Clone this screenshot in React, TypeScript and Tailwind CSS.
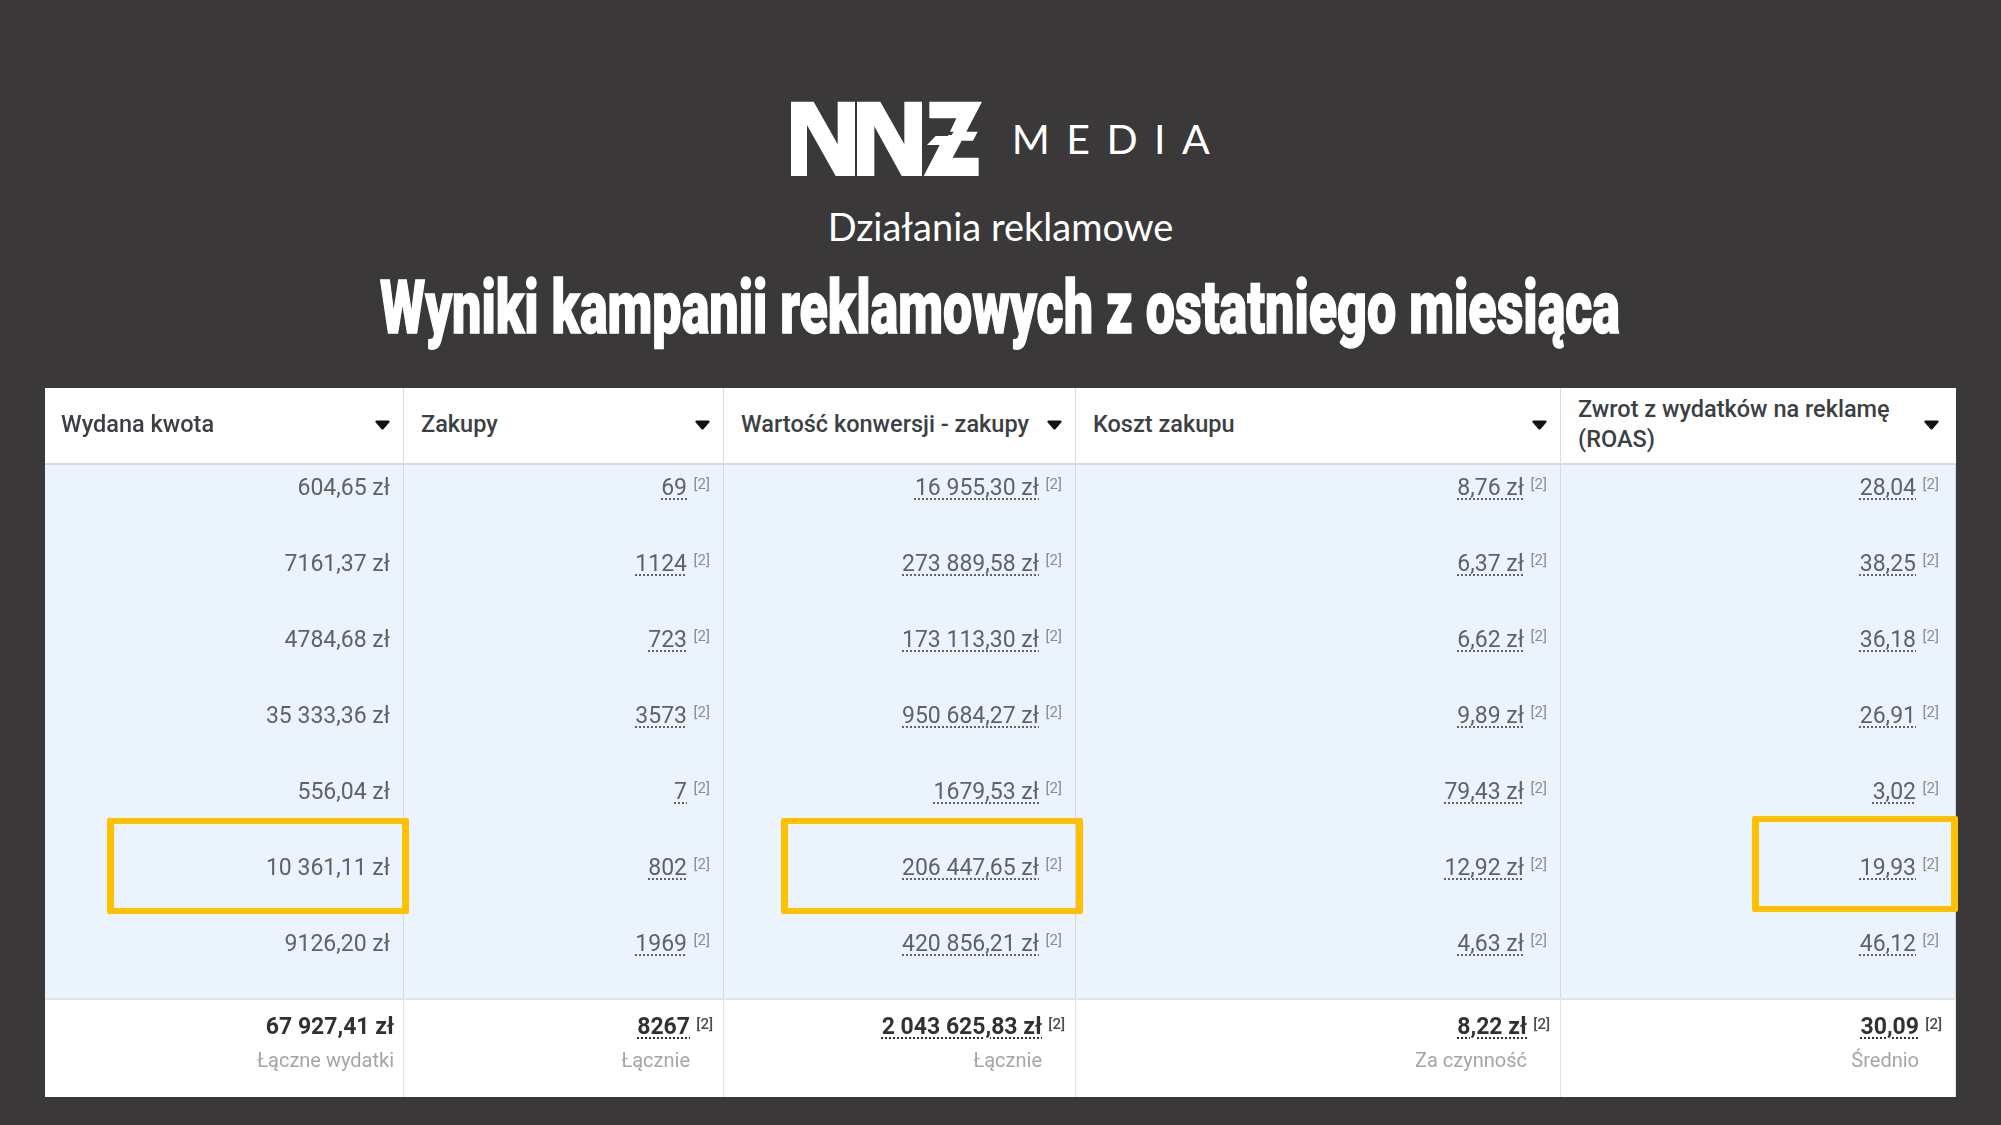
const cols = [
  { h: 'Wydana kwota', plain: true, foot: '67 927,41 zł', label: 'Łączne wydatki', v: ['604,65 zł', '7161,37 zł', '4784,68 zł', '35 333,36 zł', '556,04 zł', '10 361,11 zł', '9126,20 zł'], hd: 'pl-[16px] pr-[13px]', vp: 'pr-[13px]', fp: 'pr-[9px]' },
  { h: 'Zakupy', plain: false, foot: '8267', label: 'Łącznie', v: ['69', '1124', '723', '3573', '7', '802', '1969'], hd: 'pl-[17px] pr-[13px]', vp: 'pr-[13px]', fp: 'pr-[10px]' },
  { h: 'Wartość konwersji - zakupy', plain: false, foot: '2 043 625,83 zł', label: 'Łącznie', v: ['16 955,30 zł', '273 889,58 zł', '173 113,30 zł', '950 684,27 zł', '1679,53 zł', '206 447,65 zł', '420 856,21 zł'], hd: 'pl-[17px] pr-[13px]', vp: 'pr-[13px]', fp: 'pr-[10px]' },
  { h: 'Koszt zakupu', plain: false, foot: '8,22 zł', label: 'Za czynność', v: ['8,76 zł', '6,37 zł', '6,62 zł', '9,89 zł', '79,43 zł', '12,92 zł', '4,63 zł'], hd: 'pl-[17px] pr-[13px]', vp: 'pr-[13px]', fp: 'pr-[10px]' },
  { h: 'Zwrot z wydatków na reklamę (ROAS)', plain: false, foot: '30,09', label: 'Średnio', v: ['28,04', '38,25', '36,18', '26,91', '3,02', '19,93', '46,12'], hd: 'pl-[17px] pr-[17px]', vp: 'pr-[16px]', fp: 'pr-[13px]' },
];

const gridCols = 'grid grid-cols-[359px_320px_352px_485px_395px]';

function Arrow() {
  return (
    <svg width="15" height="10" viewBox="0 0 15 10" className="shrink-0 mt-[2px]">
      <path d="M1.5 0.5H13.5C14.6 0.5 15 1.6 14.3 2.4L8.6 8.9C8 9.6 7 9.6 6.4 8.9L0.7 2.4C0 1.6 0.4 0.5 1.5 0.5Z" fill="#111111" />
    </svg>
  );
}

function Logo() {
  return (
    <svg width="192" height="76" viewBox="32 20 576 228" role="img" aria-label="NNZ" className="shrink-0">
      <path fill="#fff" d="M32 22H100L172 150V22H224V245H166L80 92V245H32Z" />
      <path fill="#fff" d="M230 22H300L372 150V22H425V245H364L282 96V245H230Z" />
      <path fill="#fff" d="M447 22H605L558 112H592L578 139H544L517 190H595V245H430L478 152H440L466 125H503L528 72H447Z" />
      <path fill="#3a3839" d="M480 112H520L514 122H470Z" />
    </svg>
  );
}

function Header({ text, pad }: { text: string; pad: string }) {
  return (
    <div className={`h-[75px] flex items-center justify-between pb-[4px] border-r border-[#d9dde1] last:border-r-0 bg-white ${pad}`}>
      <span className="text-[23.5px] leading-[30px] font-medium text-[#3c3f43] max-w-[325px]">{text}</span>
      <Arrow />
    </div>
  );
}

function Value({ value, plain, pad }: { value: string; plain: boolean; pad: string }) {
  return (
    <div className={`h-[76px] flex justify-end items-start pt-[8px] text-[23px] leading-[30px] text-[#5f6368] ${pad}`}>
      <span className={plain ? '' : 'underline decoration-dotted decoration-[2px] underline-offset-[3px]'}>{value}</span>
      {!plain && <span className="w-[23px] text-right text-[15px] leading-[22px] text-[#8a8d91]">[2]</span>}
    </div>
  );
}

function Foot({ value, label, plain, pad }: { value: string; label: string; plain: boolean; pad: string }) {
  return (
    <div className={`h-[97px] flex flex-col items-end pt-[12px] border-r border-[#dfe1e3] bg-white ${pad}`}>
      <div className="flex items-start text-[23px] leading-[30px] font-bold text-[#2f3135]">
        <span className={plain ? '' : 'underline decoration-dotted decoration-[2px] underline-offset-[3px]'}>{value}</span>
        {!plain && <span className="w-[23px] text-right text-[15px] leading-[24px] font-medium text-[#4b4f54]">[2]</span>}
      </div>
      <div className={plain ? 'mt-[3px] text-[20px] leading-[30px] text-[#a3a5a8]' : 'mt-[3px] pr-[23px] text-[20px] leading-[30px] text-[#a3a5a8]'}>{label}</div>
    </div>
  );
}

export default function App() {
  return (
    <div className="w-[2001px] h-[1125px] bg-[#3a3839] overflow-hidden font-['Roboto',sans-serif]">
      <div className="flex items-center justify-center gap-[29px] pt-[101px] h-[177px]">
        <Logo />
        <span className="font-['Lato',sans-serif] font-normal text-[41px] leading-[76px] tracking-[16.5px] text-white -mr-[16px]">MEDIA</span>
      </div>
      <div className="mt-[24px] text-center font-['Lato',sans-serif] text-[38px] leading-[50px] text-white">Działania reklamowe</div>
      <div className="flex justify-center mt-[17px] h-[80px]">
        <h1 className="scale-x-[0.703] -translate-x-[1px] whitespace-nowrap font-['Roboto',sans-serif] font-black text-[74px] leading-[80px] text-white [-webkit-text-stroke:1.5px_white]">
          Wyniki kampanii reklamowych z ostatniego miesiąca
        </h1>
      </div>
      <div className="relative ml-[45px] mt-[40px] w-[1911px] blur-[0.4px]">
        <div className={`${gridCols} box-content border-b-2 border-[#d3dbe1]`}>
          {cols.map((c) => (
            <Header key={c.h} text={c.h} pad={c.hd} />
          ))}
        </div>
        <div className={`${gridCols} h-[535px] bg-[#ebf3fd] border-b-2 border-[#e1e3e6]`}>
          {cols.map((c) => (
            <div key={c.h} className="flex flex-col border-r border-[#d5dade]">
              {c.v.map((v) => (
                <Value key={v} value={v} plain={c.plain} pad={c.vp} />
              ))}
            </div>
          ))}
        </div>
        <div className={gridCols}>
          {cols.map((c) => (
            <Foot key={c.h} value={c.foot} label={c.label} plain={c.plain} pad={c.fp} />
          ))}
        </div>
        <div className="absolute left-[62px] top-[430px] w-[302px] h-[96px] border-x-[7px] border-y-[6px] border-[#ffc000] rounded-[2px]" />
        <div className="absolute left-[736px] top-[430px] w-[302px] h-[96px] border-x-[7px] border-y-[6px] border-[#ffc000] rounded-[2px]" />
        <div className="absolute left-[1707px] top-[428px] w-[206px] h-[96px] border-x-[7px] border-y-[6px] border-[#ffc000] rounded-[2px]" />
      </div>
    </div>
  );
}
